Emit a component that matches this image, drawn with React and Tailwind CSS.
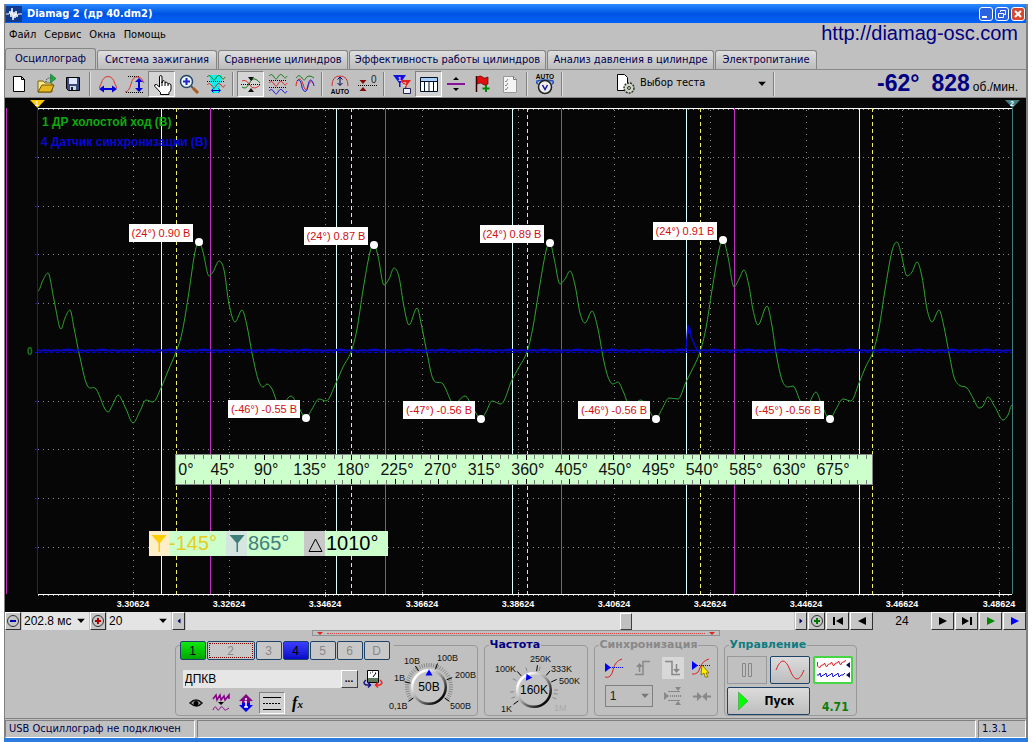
import React, { useState } from 'react';
import clsx from 'clsx';

const tabs = [
  { name: 'Осциллограф', width: 'w-[91px]' },
  { name: 'Система зажигания', width: 'w-[120px]' },
  { name: 'Сравнение цилиндров', width: 'w-[130px]' },
  { name: 'Эффективность работы цилиндров', width: 'w-[197px]' },
  { name: 'Анализ давления в цилиндре', width: 'w-[167px]' },
  { name: 'Электропитание', width: 'w-[102px]' },
];

const wave = [
  [38, 291], [43, 280], [48, 273], [54, 300], [61, 329], [65, 318], [70, 310], [74, 328], [79, 353], [87, 385], [96, 389],
  [108, 412], [113, 404], [118, 395], [126, 409], [133, 423], [140, 411], [146, 400], [153, 402], [161, 388], [168, 371],
  [176, 352], [182, 333], [188, 298], [195, 252], [199, 242], [203, 252], [209, 276], [213, 272], [219, 261], [224, 270], [229, 304], [235, 322], [242, 310], [247, 326], [252, 353], [258, 379], [263, 387], [267, 384], [272, 389], [280, 407], [291, 396], [298, 406], [306, 418], [312, 409], [319, 399], [326, 401], [336, 383], [343, 367],
  [351, 352], [357, 329], [363, 290], [370, 252], [374, 245], [378, 256], [384, 285], [389, 279], [394, 268], [399, 277], [404, 307], [409, 325], [417, 308], [422, 328], [427, 353], [433, 379], [443, 384], [454, 404], [465, 396], [473, 408], [481, 419], [486, 412], [492, 401], [501, 404], [512, 380], [519, 367],
  [527, 352], [533, 327], [539, 290], [546, 251], [550, 243], [554, 258], [560, 284], [565, 279], [570, 271], [575, 285], [580, 313], [585, 323], [592, 311], [598, 329], [603, 357], [608, 377], [613, 384], [618, 382], [623, 391], [630, 406], [641, 400], [648, 409], [656, 419], [662, 409], [669, 398], [678, 399], [686, 382], [694, 366],
  [700, 352], [706, 328], [712, 290], [719, 250], [723, 240], [728, 257], [734, 287], [739, 279], [744, 270], [749, 286], [753, 310], [758, 325], [767, 306], [772, 326], [776, 353], [782, 380], [788, 387], [793, 386], [801, 402], [808, 403], [816, 392], [822, 406], [830, 419], [836, 409], [843, 399], [851, 401], [859, 383], [866, 366],
  [873, 352], [879, 328], [885, 290], [892, 251], [897, 242], [901, 253], [907, 276], [912, 272], [917, 262], [922, 277], [927, 309], [932, 322], [939, 310], [944, 327], [949, 353], [954, 377], [959, 385], [967, 388], [973, 398], [979, 408], [983, 406], [988, 397], [995, 407], [1003, 420], [1008, 415], [1012, 405],
];

// horizontal tangents at peaks and dips, slope through the rest
const smoothPath = (pts) => {
  const slope = (i) => {
    if (i === 0 || i === pts.length - 1) return 0;
    const a = pts[i - 1], b = pts[i], c = pts[i + 1];
    if ((b[1] - a[1]) * (c[1] - b[1]) <= 0) return 0;
    return (c[1] - a[1]) / (c[0] - a[0]);
  };
  let d = `M${pts[0][0]} ${pts[0][1]}`;
  for (let i = 1; i < pts.length; i++) {
    const [x0, y0] = pts[i - 1];
    const [x1, y1] = pts[i];
    const h = (x1 - x0) / 3;
    d += `C${x0 + h} ${y0 + slope(i - 1) * h} ${x1 - h} ${y1 - slope(i) * h} ${x1} ${y1}`;
  }
  return d;
};

const noisePath = () => {
  let d = 'M38 350';
  for (let x = 40; x <= 1011; x += 2) {
    if (x === 688) {
      d += 'L688 325L689 332L690 330L691 337L693 341L696 348';
      x = 696;
      continue;
    }
    d += `L${x} ${350 + ((x * x * 31) % 17) / 7 - 1}`;
  }
  return d;
};

const peaks = [
  { x: 199, y: 242, left: 129, top: 224, width: 64, text: '(24°) 0.90 В' },
  { x: 374, y: 245, left: 304, top: 227, width: 64, text: '(24°) 0.87 В' },
  { x: 550, y: 243, left: 480, top: 225, width: 64, text: '(24°) 0.89 В' },
  { x: 723, y: 240, left: 653, top: 222, width: 64, text: '(24°) 0.91 В' },
  { x: 306, y: 418, left: 228, top: 400, width: 72, text: '(-46°) -0.55 В' },
  { x: 481, y: 419, left: 403, top: 401, width: 72, text: '(-47°) -0.56 В' },
  { x: 656, y: 419, left: 578, top: 401, width: 72, text: '(-46°) -0.56 В' },
  { x: 830, y: 419, left: 752, top: 401, width: 72, text: '(-45°) -0.56 В' },
];

const gridX = [133, 229, 325, 422, 518, 614, 710, 806, 902, 999];
const gridY = [157, 206, 254, 303, 401, 449, 498, 547];
const times = ['3.30624', '3.32624', '3.34624', '3.36624', '3.38624', '3.40624', '3.42624', '3.44624', '3.46624', '3.48624'];

const Scope = () => (
  <svg viewBox="5 98 1021 514" className="block w-full bg-[#060606] font-['Liberation_Sans',sans-serif]">
    <g shapeRendering="crispEdges" fill="none">
      {gridX.map((x) => <path key={x} d={`M${x}.5 110V594`} stroke="#8a8a8a" strokeDasharray="1 5" />)}
      {gridY.map((y) => <path key={y} d={`M38 ${y}.5H1011`} stroke="#8a8a8a" strokeDasharray="1 4" />)}
      {gridX.map((x) => <path key={x} d={`M${x}.5 592V597`} stroke="#bbb" />)}
      <path d="M38 108.5H1012M38 594.5H1012" stroke="#fff" />
      <path d="M38 109.5H1012M38 595.5H1012" stroke="#999" strokeDasharray="1 4" />
      {[161, 336, 512, 686, 859].map((x) => <path key={x} d={`M${x}.5 108V594`} stroke="#dcffff" />)}
      {[6, 210, 385, 561, 734].map((x) => <path key={x} d={`M${x}.5 108V594`} stroke="#c030c0" />)}
      {[176, 351, 527, 700, 872].map((x) => <path key={x} d={`M${x}.5 108V594`} stroke="#f0f060" strokeDasharray="4 3" />)}
      <path d="M37.5 108V594" stroke="#1414c0" />
      <path d="M35 157.5h3M35 206.5h3M35 254.5h3M35 303.5h3M35 352.5h3M35 401.5h3M35 449.5h3M35 498.5h3M35 547.5h3" stroke="#1414c0" />
      <path d="M1012.5 108V594" stroke="#427c7c" />
      <path d="M38 352.5H1012" stroke="#0000c8" strokeDasharray="3 3" />
    </g>
    <path d={smoothPath(wave)} fill="none" stroke="#2fa52f" />
    <path d={noisePath()} fill="none" stroke="#0505d2" strokeWidth="1.5" />
    <path d="M38 350.5H1012" stroke="#0808c0" strokeWidth="1.5" />
    <path d="M30 100h15l-7.500 8z" fill="#fc0" />
    <path d="M1005 100h15l-7.500 8z" fill="#427c7c" />
    <text x="37" y="106" fontSize="7" fontWeight="bold" fill="#fff" textAnchor="middle">1</text>
    <text x="1012" y="106" fontSize="7" fontWeight="bold" fill="#fff" textAnchor="middle">2</text>
    <g fontWeight="bold" fontSize="12">
      <text x="42" y="126" fill="#0faa0f">1 ДР холостой ход (В)</text>
      <text x="41" y="146" fill="#0808d8">4 Датчик синхронизации (В)</text>
    </g>
    <text x="27" y="355" fontSize="10" fontWeight="bold" fill="#1b7a1b">0</text>
    {peaks.map((p) => (
      <g key={p.x}>
        <circle cx={p.x} cy={p.y} r="4" fill="#fff" />
        <rect x={p.left} y={p.top} width={p.width} height="18" fill="#fff" />
        <text x={p.left + p.width / 2} y={p.top + 13} fontSize="11" fill="#d01010" textAnchor="middle">{p.text}</text>
      </g>
    ))}
    <rect x="175.500" y="454.500" width="697" height="30" fill="#ccffcc" stroke="#888" />
    {Array.from({ length: 79 }, (_, i) => {
      const major = i % 5 === 4;
      const x = Math.round(176.5 + (i + 1) * 8.73) + 0.5;
      const len = major ? 5 : 4;
      return <path key={i} d={`M${x} 455v${len}M${x} 484v-${len}`} stroke={major ? '#000' : '#777'} shapeRendering="crispEdges" />;
    })}
    <g fontSize="16" fill="#111" textAnchor="middle">
      {Array.from({ length: 16 }, (_, i) => (
        <text key={i} x={i ? 179 + i * 43.6 : 186} y="475">{i * 45}°</text>
      ))}
    </g>
    <rect x="149" y="531" width="239" height="25" fill="#ccffcc" />
    <rect x="149" y="531" width="20" height="25" fill="#ffefc8" />
    <rect x="226" y="531" width="21" height="25" fill="#d5e5e0" />
    <rect x="304" y="531" width="21" height="25" fill="#c8c8c8" />
    <path d="M151.500 535h15l-6.500 8v9h-1.500v-9z" fill="#fc0" />
    <path d="M229.500 535h15l-6.500 8v9h-1.500v-9z" fill="#3f7c7c" />
    <path d="M309 551.500l6.500-12.500 6.500 12.500z" fill="none" stroke="#000" />
    <g fontSize="20">
      <text x="169" y="550" fill="#e8cc20">-145°</text>
      <text x="248" y="550" fill="#42807c">865°</text>
      <text x="326" y="550" fill="#000">1010°</text>
    </g>
    <g fontSize="9" fontWeight="bold" fill="#fff" textAnchor="middle">
      {times.map((t, i) => <text key={t} x={gridX[i]} y="607">{t}</text>)}
    </g>
  </svg>
);

const Icon = ({ children, size = 'size-[22px]', box = '0 0 22 22' }) => (
  <svg viewBox={box} className={clsx('shrink-0', size)} fill="none" aria-hidden="true">{children}</svg>
);

const Zig = ({ y, c }) => <path d={`M2 ${y - 2}c2-2 3-2 5 1s3 2 4 0 3-4 5-1 3 2 4 0`} stroke={c} />;

const toolGroups = [
  [
    { label: 'Новый', icon: <path d="M5.500 3.500h8l3 3v12h-11zM13.500 3.500v3h3" fill="#fff" stroke="#000" /> },
    { label: 'Открыть', icon: <><path d="M3 8h5l2 2h7v9H3z" fill="#fbe78a" stroke="#7a6410" /><path d="M3 19l4-7h12l-3 7z" fill="#e8b820" stroke="#6a5000" /><path d="M11 9q0-4 4-4h1" stroke="#222" strokeDasharray="1 1" /><path d="M15.500 1v9L21 5.500z" fill="#18a83a" stroke="#063" strokeWidth=".5" /></> },
    { label: 'Сохранить', icon: <><path d="M4.500 4.500h13v13h-11l-2-2z" fill="#3a4c78" stroke="#000" /><path d="M7 5h8v6H7z" fill="#dfe8ff" /><path d="M8 13h6v4H8z" fill="#cfd8e0" /><path d="M9 14h2v3H9z" fill="#123" /></> },
  ],
  [
    { label: 'Период', icon: <><path d="M2.500 15q0-2 1.500-4Q6 3.500 11 3.500T18 11q1.500 2 1.500 4" stroke="#d33" /><path d="M5 16h12" stroke="#00d" strokeWidth="2" /><path d="M2 16l5-3.500v7zM20 16l-5-3.500v7z" fill="#00d" /></> },
    { label: 'Амплитуда', icon: <><path d="M4 3.500h12M2 19.500h18" stroke="#000" strokeDasharray="1 1" /><path d="M1 19q4 0 6-8t7-7q4 0 6 6" stroke="#d33" /><path d="M15 8v8" stroke="#00d" strokeWidth="2" /><path d="M15 5l4 4h-8zM15 19l4-4h-8z" fill="#00d" /></> },
    { label: 'Рука', pressed: true, icon: <path d="M8.500 14V4q0-1.500 1.200-1.500T11 4v6l.5-2q2-1 2.500.5V10q2-1.500 3 .5V11q2-1 3 .8V16q0 2-2 3.500v2H9.500v-2L3.500 13q0-2 2-1.500zM14 10v3M17 11v2M11 9v4" fill="#fff" stroke="#000" /> },
    { label: 'Масштаб', icon: <><circle cx="8.500" cy="8.500" r="6" fill="#e8f4ff" stroke="#246" strokeWidth="1.500" /><path d="M8.500 5v7M5 8.500h7" stroke="#22c" strokeWidth="2" /><path d="M13 13l2 2" stroke="#555" strokeWidth="2" /><path d="M15 15l5 5" stroke="#a85a20" strokeWidth="3" /></> },
    { label: 'Фрагмент', icon: <><path d="M5 2h12v8H5zM7 9h8v11H7z" fill="#1ee" /><Zig y={6} c="#070" /><Zig y={14} c="#c22" /><path d="M2 8.500h18" stroke="#000" strokeDasharray="1 1" /><path d="M7 17.500h8M8.500 15.500l-2 2 2 2M13.500 15.500l2 2-2 2" stroke="#00c" /></> },
  ],
  [
    { label: 'Совместить', pressed: true, icon: <><path d="M2 8q4-2 7 3t6 4 5-3" stroke="#c33" /><path d="M2 14q4 3 7-3t6-5 5 4" stroke="#171" /><path d="M1 11.500h20" stroke="#000" strokeDasharray="1 1" /><path d="M11 8L8 4h6zM11 15l3 4H8z" fill="#111" /></> },
    { label: 'Разделить', icon: <><Zig y={5} c="#171" /><Zig y={12} c="#d22" /><Zig y={20} c="#11d" /><path d="M2 7.500h18M2 14.500h18" stroke="#000" strokeDasharray="1 1" /></> },
    { label: 'Наложить', icon: <><path d="M2 5c2-3 4-3 6 0s3 2 4 0 4-3 8 0" stroke="#171" /><path d="M2 13c1-9 5-9 7-2s3 7 5 2 3-6 6-2" stroke="#d22" /><path d="M3 8c3-3 4 1 5 6s5 7 6-1 4-8 6 0" stroke="#11d" /></> },
  ],
  [
    { label: 'Автомасштаб', icon: <><path d="M3 13q0-10 8-10t8 10" stroke="#c33" /><path d="M11 4v8M8.500 6.500L11 4l2.500 2.500M8.500 10l2.500 2.500L13.500 10" stroke="#006" /><text x="11" y="20.500" fontSize="6.500" fontWeight="bold" fill="#000" textAnchor="middle">AUTO</text></> },
    { label: 'Установка нуля', icon: <><path d="M2 12.500h19" stroke="#000" strokeDasharray="1 1" /><path d="M7 11L3.500 7h7zM7 14l3.500 4h-7z" fill="#800c0c" /><text x="15" y="10" fontSize="10" fill="#222">0</text></> },
  ],
  [
    { label: 'Маркеры', icon: <><path d="M2 2h13l-5.500 8v4H8v-4z" fill="#11d" /><path d="M9 7h11l-4.500 6v4H14v-4z" fill="#d22" /><text x="7" y="8" fontSize="6" fontWeight="bold" fill="#fff">1</text><text x="12" y="13" fontSize="6" fill="#fff">2</text><path d="M12.500 15.500h7v5h-7z" fill="#eef" stroke="#225" /></> },
    { label: 'Таблица', pressed: true, icon: <><path d="M2.500 4.500h17v14h-17z" fill="#fff" stroke="#012" /><path d="M3 5h16v3H3z" fill="#a8d0f8" /><path d="M2 8.500h18M6.500 8v10M11 8v10M15.500 8v10" stroke="#012" /></> },
    { label: 'Уровень', icon: <><path d="M2 11h18" stroke="#819" strokeWidth="2" /><path d="M11 4l3 3H8zM11 18l3-3H8z" fill="#000" /></> },
    { label: 'Флаг', icon: <><path d="M4.500 3v16" stroke="#300" strokeWidth="1.500" /><path d="M5 4q4-2 5.500 0t5.500 0v7q-4 2-5.500 0T5 11z" fill="#e01010" stroke="#600" strokeWidth=".7" /><path d="M14 12v7M10.500 15.500h7" stroke="#080" strokeWidth="2" /></> },
    { label: 'Отчёт', icon: <><path d="M4.500 3.500h10l3 3v13h-13z" fill="#f4f4f4" stroke="#999" /><path d="M14.500 3.500v3h3" stroke="#777" /><path d="M6 8l1 1 2-3M6 12l1 1 2-3M6 16l1 1 2-3" stroke="#888" /></> },
  ],
  [
    { label: 'Автонастройка', icon: <><text x="11" y="6" fontSize="6.500" fontWeight="bold" fill="#000" textAnchor="middle">AUTO</text><path d="M4 11Q2 10 3 8q8-2 16 0q1 2-1 3" stroke="#25c" strokeWidth="1.500" /><circle cx="11" cy="14" r="6.500" fill="#eee" stroke="#222" strokeWidth="1.500" /><path d="M8.500 12L11 16.500 13.500 12" stroke="#11a" strokeWidth="1.500" /></> },
  ],
];

const ToolSep = () => <span className="mx-[3px] h-6 w-[2px] shrink-0 border-l border-[#808080] bg-[#dedede]" />;

const ToolButton = ({ label, pressed, icon }) => (
  <button
    type="button"
    aria-label={label}
    aria-pressed={!!pressed}
    className={clsx(
      'flex h-[26px] w-[27px] shrink-0 items-center justify-center',
      pressed && 'border border-t-[#808080] border-l-[#808080] border-r-white border-b-white bg-[#d4d4d4]'
    )}
  >
    <Icon>{icon}</Icon>
  </button>
);

const Nav = ({ label, width = 'w-[23px]', children }) => (
  <button
    type="button"
    aria-label={label}
    className={clsx('flex h-full shrink-0 items-center justify-center border border-t-white border-l-white border-r-[#303030] border-b-[#303030] bg-[#c6c6c6]', width)}
  >
    <Icon size="size-3.5" box="0 0 14 14">{children}</Icon>
  </button>
);

const Caret = () => (
  <svg viewBox="0 0 8 5" className="pointer-events-none absolute top-1/2 right-1 h-[5px] w-2 -translate-y-1/2" aria-hidden="true">
    <path d="M0 0h8L4 4.500z" fill="currentColor" />
  </svg>
);

// sizes are in dial units, the labels sit around the ticks
const Knob = ({ cx, cy, width, value, labels, ticks, minor, pointer, box, name }) => {
  const ray = (deg, r1, r2) => {
    const a = (deg * Math.PI) / 180;
    return `M${cx + r1 * Math.sin(a)} ${cy - r1 * Math.cos(a)}L${cx + r2 * Math.sin(a)} ${cy - r2 * Math.cos(a)}`;
  };
  return (
    <svg viewBox={box} className={clsx('shrink-0', width)} role="img" aria-label={name} fontSize="9">
      <defs>
        <linearGradient id={`edge-${name}`} x1="0" y1="0" x2="1" y2="1">
          <stop offset="0.200" stopColor="#fff" />
          <stop offset="0.500" stopColor="#999" />
          <stop offset="0.850" stopColor="#000" />
        </linearGradient>
      </defs>
      {minor.map((d) => <path key={d} d={ray(d, 20, 24)} stroke="#888" />)}
      {ticks.map((d) => <path key={d} d={ray(d, 19, 25)} stroke="#000" />)}
      <circle cx={cx} cy={cy} r="18" fill={`url(#edge-${name})`} />
      <circle cx={cx} cy={cy} r="15.500" fill="#c4c4c4" />
      <path d="M-3.500 2.500L0-3.500 3.500 2.500z" fill="#00f" transform={pointer} />
      <text x={cx} y={cy + 4} fontSize="12" textAnchor="middle">{value}</text>
      {labels.map((l) => <text key={l.t} x={l.x} y={l.y} fill={l.dim ? '#aaa' : '#111'}>{l.t}</text>)}
    </svg>
  );
};

const channels = [
  { n: '1', style: 'w-[26px] bg-linear-to-b from-[#10e810] to-[#00a800] text-black' },
  { n: '2', style: 'w-12 outline-1 -outline-offset-3 outline-dotted outline-[#800000] text-[#888]' },
  { n: '3', style: 'w-[26px] text-[#888]' },
  { n: '4', style: 'w-[26px] bg-linear-to-b from-[#3c3cff] to-[#0808c8] text-black' },
  { n: '5', style: 'w-[26px] text-[#888]' },
  { n: '6', style: 'w-[26px] text-[#888]' },
  { n: 'D', style: 'w-[26px] text-[#888]' },
];

const range = (from, to, step) => {
  const out = [];
  for (let i = from; i <= to; i += step) out.push(i);
  return out;
};

const groupBox = 'rounded-[4px] border border-[#999]';
const legendStyle = "ml-1 px-px font-['DejaVu_Sans',sans-serif] text-[11px] leading-3 font-bold";

const ChannelPanel = () => (
  <div className={clsx('mt-[6px] flex w-[303px] px-1', groupBox)}>
    <div className="w-[208px] shrink-0">
      <div className="-mt-[5px] flex w-[214px] gap-px bg-[#c0c0c0]">
        {channels.map((c) => (
          <button
            key={c.n}
            type="button"
            className={clsx('h-[19px] shrink-0 rounded-[2px] border border-[#1d4468] bg-[#c8c8c8] text-[12px] leading-none', c.style)}
          >
            {c.n}
          </button>
        ))}
      </div>
      <div className="mt-2 flex items-center gap-1 pl-[3px]">
        <div className="flex h-[18px] w-[175px] bg-[#e6e6e6]">
          <input aria-label="Датчик" defaultValue="ДПКВ" className="w-0 flex-1 px-[2px] text-[12px] outline-none" />
          <button type="button" aria-label="Выбрать датчик" className="w-[17px] border border-t-white border-l-white border-r-[#404040] border-b-[#404040] bg-[#c8c8c8] text-[10px] leading-[8px] font-bold">...</button>
        </div>
        <button type="button" aria-label="Поменять">
          <Icon>
            <path d="M5.500 2.500h11v12h-11z" fill="#fff" stroke="#000" />
            <path d="M6 10h10v4H6z" fill="#5a7a5a" />
            <path d="M8 5h1M10 4h1M13 5h1M11 9l3-4" stroke="#000" />
            <path d="M4 12q-4 3 0 5h4M6 14.500L8.500 17 6 19.500" stroke="#118" strokeWidth="1.500" />
            <path d="M18 12q4 3 0 5h-4M16 14.500L13.500 17l2.500 2.500" stroke="#e22" strokeWidth="1.500" />
          </Icon>
        </button>
      </div>
      <div className="mt-[2px] flex items-center gap-px pl-1">
        <button type="button" aria-label="Показать" className="flex h-[22px] w-6 items-center justify-center">
          <Icon>
            <path d="M5 11q6-6 12 0q-5 6-12 0z" fill="#aaa" stroke="#111" strokeWidth="1.500" />
            <circle cx="11" cy="11.500" r="2.500" fill="#000" />
          </Icon>
        </button>
        <button type="button" aria-label="Фильтр" className="flex h-[22px] w-6 items-center justify-center">
          <Icon>
            <path d="M3 7l3-4 1 5 3-5 1 5 3-4 1 4 4-5v4" stroke="#808" strokeWidth="1.500" />
            <path d="M3 18c2-5 3-3 4-1s2 1 3-1 3-1 4 1 2 1 5-1" stroke="#808" />
            <path d="M8 10h6l-3 3z" fill="#000" />
          </Icon>
        </button>
        <button type="button" aria-label="Инверсия" className="flex h-[22px] w-6 items-center justify-center">
          <Icon>
            <path d="M11 2l7 7h-3v2H7V9H4z" fill="#800880" />
            <path d="M11 20l7-7h-3v-2H7v2H4z" fill="#00e" />
            <path d="M11 6v2M9.500 9.500H11V15M9 15h4" stroke="#fff" strokeWidth="1.500" />
          </Icon>
        </button>
        <button type="button" aria-label="Линии" aria-pressed="true" className="flex h-[22px] w-[26px] items-center justify-center border border-t-[#808080] border-l-[#808080] border-r-white border-b-white bg-[#d0d0d0]">
          <Icon>
            <path d="M2 5.500h18M2 17.500h18" stroke="#000" />
            <path d="M2 11.500h18" stroke="#000" strokeDasharray="2 1" />
          </Icon>
        </button>
        <button type="button" aria-label="Функция" className="h-[22px] w-6 font-['Liberation_Serif',serif] text-[16px] leading-none font-bold italic">
          f<span className="text-[11px]">x</span>
        </button>
      </div>
    </div>
    <div className="flex items-center">
      <Knob
        name="voltage"
        box="388 652 90 64"
        width="w-[90px]"
        cx={429}
        cy={690}
        value="50В"
        pointer="translate(429 676)"
        minor={range(-126, 126, 6)}
        ticks={[-125, -78, -33, 20, 68, 125]}
        labels={[
          { t: '0,1В', x: 389, y: 712 }, { t: '1В', x: 394, y: 684 }, { t: '10В', x: 404, y: 667 },
          { t: '100В', x: 437, y: 664 }, { t: '200В', x: 455, y: 681 }, { t: '500В', x: 450, y: 712 },
        ]}
      />
    </div>
  </div>
);

const SyncPanel = () => (
  <fieldset className={clsx('w-[124px]', groupBox)}>
    <legend className={clsx(legendStyle, 'text-[#888]')}>Синхронизация</legend>
    <div className="grid grid-cols-4 justify-items-center gap-y-[6px] pt-[6px] pl-[5px]">
      <button type="button" aria-label="Уровень синхронизации">
        <Icon>
          <path d="M2 20q6 2 8-7t9-11" stroke="#d22" />
          <path d="M3 10.500h17" stroke="#00e" strokeDasharray="1 1" />
          <path d="M2 6l6 4.500L2 15z" fill="#00f" />
        </Icon>
      </button>
      <button type="button" aria-label="Фронт" disabled>
        <Icon>
          <path d="M3 17.500h8v-13h7M7.500 15V9" stroke="#888" strokeWidth="1.500" />
          <path d="M4 10l3.500-4 3.500 4z" fill="#888" />
        </Icon>
      </button>
      <button type="button" aria-label="Спад" disabled className="bg-[#d8d8d8]">
        <Icon>
          <path d="M3 4.500h7v13h8M14.500 7v6" stroke="#888" strokeWidth="1.500" />
          <path d="M11 12l3.500 4 3.500-4z" fill="#888" />
        </Icon>
      </button>
      <button type="button" aria-label="Указать уровень">
        <Icon>
          <path d="M1 17q6 1 8-6t9-9" stroke="#d22" />
          <path d="M2 8.500h18" stroke="#00e" strokeDasharray="1 1" />
          <path d="M1 4l6 4.500L1 13z" fill="#00f" />
          <path d="M11 8l7 8h-3l2 4h-3l-1-4-3 2z" fill="#fe0" stroke="#650" strokeWidth=".700" />
        </Icon>
      </button>
      <div className="relative col-span-2 h-[22px] w-12 text-[#777]">
        <select aria-label="Канал синхронизации" className="h-full w-full appearance-none border border-[#808080] px-1 text-[12px] leading-none text-[#222]">
          <option>1</option>
        </select>
        <Caret />
      </div>
      <button type="button" aria-label="По вертикали" disabled>
        <Icon>
          <path d="M6 6.500h12M6 15.500h12" stroke="#888" />
          <path d="M8 11h11" stroke="#888" strokeWidth="2" strokeDasharray="1 1" />
          <path d="M2 7l5 4-5 4zM13 2h6l-3 4zM13 20h6l-3-4z" fill="#888" />
        </Icon>
      </button>
      <button type="button" aria-label="К центру" disabled>
        <Icon>
          <path d="M2 11.500h7M13 11.500h7" stroke="#888" strokeWidth="2" />
          <path d="M6 7l5 4.500L6 16zM16 7l-5 4.500 5 4.500z" fill="#888" />
        </Icon>
      </button>
    </div>
  </fieldset>
);

const ControlPanel = () => (
  <fieldset className={clsx('w-[133px]', groupBox)}>
    <legend className={clsx(legendStyle, 'text-[#107c80]')}>Управление</legend>
    <div className="grid grid-cols-3 gap-x-[3px] gap-y-[3px] px-[2px] pt-[5px]">
      <button type="button" aria-label="Пауза" disabled className="flex h-7 items-center justify-center border border-[#999]">
        <Icon><path d="M6.500 4.500h3v13h-3zM12.500 4.500h3v13h-3z" stroke="#888" /></Icon>
      </button>
      <button type="button" aria-label="Осциллограмма" className="flex h-7 items-center justify-center rounded-[2px] border border-[#1d4468] bg-linear-to-b from-[#dcdcdc] to-[#bdbdbd]">
        <svg viewBox="0 0 30 20" className="h-5 w-[30px]" fill="none" aria-hidden="true">
          <path d="M1 10Q8-8 15 10T29 10" stroke="#d22" />
        </svg>
      </button>
      <button type="button" aria-label="Запись" className="flex h-7 items-center justify-center rounded-[2px] border-2 border-[#44d644] bg-white">
        <svg viewBox="0 0 34 20" className="h-5 w-[34px]" fill="none" aria-hidden="true">
          <path d="M1.500 2v4l2 2 2-3h2l1-2 2 4 2-3h2l1-2 2 4 2-3h2l1-2 2 4 2-3h2l1-2" stroke="#d22" />
          <path d="M1 15h2l1-2 1 4 2-2h1l2-2 1 4 2-2h1l2-2 1 4 2-2h1l2-2 1 4 2-2h2l2-2" stroke="#11d" />
          <path d="M34 2v6l-4-3zM34 12v6l-4-3z" fill="#115" />
        </svg>
      </button>
      <button type="button" className="col-span-2 flex h-7 items-center gap-[10px] rounded-[2px] border border-[#1d4468] bg-linear-to-b from-[#dcdcdc] to-[#bdbdbd] pl-[5px] font-['DejaVu_Sans_Condensed','DejaVu_Sans',sans-serif] text-[12px] font-bold">
        <Icon><path d="M5.500 2v18L15 11z" fill="#0f0" stroke="#484" strokeWidth=".500" /></Icon>
        Пуск
      </button>
      <span className="self-center justify-self-center pl-1 pt-3 font-['DejaVu_Sans_Condensed','DejaVu_Sans',sans-serif] text-[12px] leading-none font-bold text-[#0c7c0c]">4.71</span>
    </div>
  </fieldset>
);

const App = () => {
  const [activeTab, setActiveTab] = useState('Осциллограф');
  const [position, setPosition] = useState(728);

  return (
    <div className="bg-white px-1 pt-1 font-['Liberation_Sans',sans-serif] text-[11px] text-black">
      <div className="border-r-2 border-l border-[#808080] bg-[#c0c0c0]">
        <header className="flex h-[19px] items-center bg-linear-to-b from-[#2c8cff] via-[#0054e3] to-[#0062f8] pr-px pl-px">
          <svg viewBox="0 0 16 16" className="mr-[5px] size-4" aria-hidden="true">
            <path d="M0 0h16v16H0z" fill="#123a8c" />
            <path d="M0 8h3l1-3 1 6 1-9 1 12 1-8 1 6 1-7 1 6 1-3h4" fill="none" stroke="#fff" />
          </svg>
          <h1 className="flex-1 pt-px font-['DejaVu_Sans_Condensed','DejaVu_Sans',sans-serif] text-[11px] leading-[18px] font-bold text-white">Diamag 2 (др 40.dm2)</h1>
          <div className="flex gap-[2px]">
            <button type="button" aria-label="Свернуть" className="rounded-[3px] border border-white bg-[#2c62e0]">
              <Icon size="size-3" box="0 0 12 12"><path d="M2 9h5" stroke="#fff" strokeWidth="2" /></Icon>
            </button>
            <button type="button" aria-label="Восстановить" className="rounded-[3px] border border-white bg-[#2c62e0]">
              <Icon size="size-3" box="0 0 12 12"><path d="M4.500 4V2.500h5v4H8M2.500 5.500h5v4h-5z" stroke="#fff" /></Icon>
            </button>
            <button type="button" aria-label="Закрыть" className="rounded-[3px] border border-white bg-[#d8482c]">
              <Icon size="size-3" box="0 0 12 12"><path d="M3 3l6 6M9 3l-6 6" stroke="#fff" strokeWidth="2" /></Icon>
            </button>
          </div>
        </header>

        <div className="flex h-[25px] justify-between pr-2 pl-1">
          <nav className="flex items-center gap-2 font-['DejaVu_Sans_Condensed','DejaVu_Sans',sans-serif] text-[11px]">
            {['Файл', 'Сервис', 'Окна', 'Помощь'].map((item) => (
              <button key={item} type="button">{item}</button>
            ))}
          </nav>
          <a href="http://diamag-osc.com" className="text-[20px] leading-5 text-[#000080]">http://diamag-osc.com</a>
        </div>

        <div className="flex h-[21px] items-end gap-px" role="tablist">
          {tabs.map((tab) => (
            <button
              key={tab.name}
              type="button"
              role="tab"
              aria-selected={activeTab === tab.name}
              onClick={() => setActiveTab(tab.name)}
              className={clsx(
                "rounded-t-[3px] border border-b-0 border-[#858585] font-['DejaVu_Sans_Condensed','DejaVu_Sans',sans-serif] text-[11px] whitespace-nowrap text-[#00004c]",
                tab.width,
                activeTab === tab.name ? 'h-[21px]' : 'h-[19px] bg-linear-to-b from-[#dedede] to-[#bcbcbc]'
              )}
            >
              {tab.name}
            </button>
          ))}
        </div>

        <div className="flex h-[29px] items-center border-t border-b border-[#888]" role="toolbar">
          {toolGroups.map((group, i) => (
            <React.Fragment key={i}>
              {group.map((tool) => <ToolButton key={tool.label} {...tool} />)}
              <ToolSep />
            </React.Fragment>
          ))}
          <div className="relative ml-12 flex w-[156px] items-center">
            <div className="pointer-events-none absolute left-0">
              <Icon>
                <path d="M3.500 1.500h7l3 3v13h-10z" fill="#fff" stroke="#000" />
                <circle cx="15" cy="15" r="5" fill="#ced8c4" stroke="#333" strokeDasharray="2 1" strokeWidth="1.500" />
                <circle cx="15" cy="15" r="1.500" stroke="#333" />
              </Icon>
            </div>
            <select aria-label="Выбор теста" className="h-6 w-full appearance-none pl-[26px] font-['DejaVu_Sans_Condensed','DejaVu_Sans',sans-serif] text-[11px] outline-none">
              <option>Выбор теста</option>
            </select>
            <Caret />
          </div>
          <ToolSep />
          <div className="ml-auto flex items-baseline pr-2 font-bold text-[#000080]">
            <span className="mr-3 text-[23px] leading-6">-62°</span>
            <span className="mr-[3px] text-[23px] leading-6">828</span>
            <span className="text-[12px] font-normal text-black">об./мин.</span>
          </div>
        </div>

        <Scope />

        <div className="flex h-[18px] gap-px">
          <Nav label="Уменьшить развёртку" width="w-4">
            <circle cx="7" cy="7" r="5.500" stroke="#333" /><path d="M4 7h6" stroke="#00a" strokeWidth="2" />
          </Nav>
          <div className="relative w-[67px]">
            <select aria-label="Развёртка" className="h-full w-full appearance-none bg-[#e4e4e4] px-[2px] text-[12px] leading-none">
              <option>202.8 мс</option>
            </select>
            <Caret />
          </div>
          <Nav label="Увеличить развёртку" width="w-4">
            <circle cx="7" cy="7" r="5.500" stroke="#333" /><path d="M4 7h6M7 4v6" stroke="#a00" strokeWidth="2" />
          </Nav>
          <div className="relative w-[64px]">
            <select aria-label="Кадров" className="h-full w-full appearance-none bg-[#e4e4e4] px-[2px] text-[12px] leading-none">
              <option>20</option>
            </select>
            <Caret />
          </div>
          <Nav label="Прокрутка влево" width="w-[13px]"><path d="M8.500 4.500v5l-3-2.500z" fill="#006" /></Nav>
          <input
            type="range"
            aria-label="Позиция"
            min="0"
            max="1000"
            value={position}
            onChange={(e) => setPosition(e.target.value)}
            className="h-full w-0 flex-1 appearance-none bg-[#dedede] [&::-webkit-slider-thumb]:h-[17px] [&::-webkit-slider-thumb]:w-3 [&::-webkit-slider-thumb]:appearance-none [&::-webkit-slider-thumb]:border [&::-webkit-slider-thumb]:border-t-white [&::-webkit-slider-thumb]:border-r-[#404040] [&::-webkit-slider-thumb]:border-b-[#404040] [&::-webkit-slider-thumb]:border-l-white [&::-webkit-slider-thumb]:bg-[#c0c0c0]"
          />
          <Nav label="Прокрутка вправо" width="w-3"><path d="M5.500 4.500v5l3-2.500z" fill="#006" /></Nav>
          <Nav label="Добавить" width="w-[17px]">
            <circle cx="7" cy="7" r="5.500" stroke="#333" /><path d="M4 7h6M7 4v6" stroke="#070" strokeWidth="2" />
          </Nav>
          <Nav label="В начало"><path d="M2 3h2v8H2zM12 3v8L5 7z" fill="#000" /></Nav>
          <Nav label="Назад"><path d="M11 3v8L3 7z" fill="#000" /></Nav>
          <span className="w-14 text-center text-[12px] leading-[18px]">24</span>
          <Nav label="Вперёд"><path d="M3 3v8l8-4z" fill="#000" /></Nav>
          <Nav label="В конец"><path d="M2 3v8l7-4zM10 3h2v8h-2z" fill="#000" /></Nav>
          <Nav label="Воспроизвести"><path d="M3 3v8l8-4z" fill="#080" /></Nav>
          <Nav label="Воспроизвести кадр"><path d="M3 3v8l8-4z" fill="#00f" /></Nav>
        </div>

        <button type="button" aria-label="Свернуть панель" className="mx-auto flex h-[6px] w-[408px] items-center gap-1 border border-[#909090] px-1">
          <svg viewBox="0 0 6 3" className="h-[3px] w-[6px]" aria-hidden="true"><path d="M0 0h6L3 3z" fill="#d22" /></svg>
          <span className="h-0 flex-1 border-t border-dotted border-[#d44]" />
          <svg viewBox="0 0 6 3" className="h-[3px] w-[6px]" aria-hidden="true"><path d="M0 0h6L3 3z" fill="#d22" /></svg>
        </button>

        <div className="flex justify-center gap-[6px] border-b border-[#808080] pt-[3px] pb-[2px]">
          <ChannelPanel />
          <fieldset className={clsx('w-[104px]', groupBox)}>
            <legend className={clsx(legendStyle, 'text-[#000080]')}>Частота</legend>
            <Knob
              name="frequency"
              box="485 651 100 64"
              width="w-[100px]"
              cx={534}
              cy={690}
              value="160K"
              pointer="translate(528 677) rotate(-25)"
              minor={[-110, -95, -62, -20, 15, 90, 100, 112]}
              ticks={[-125, -42, 8, 40, 65]}
              labels={[
                { t: '1K', x: 501, y: 712 }, { t: '100K', x: 495, y: 672 }, { t: '250K', x: 530, y: 662 },
                { t: '333K', x: 551, y: 672 }, { t: '500K', x: 559, y: 684 }, { t: '1M', x: 554, y: 711, dim: true },
              ]}
            />
          </fieldset>
          <SyncPanel />
          <ControlPanel />
        </div>

        <footer className="flex h-[19px] gap-[2px] pt-px text-[#00004c]">
          <span className="w-[190px] border border-t-[#808080] border-l-[#808080] border-r-white border-b-white pl-[3px] font-['DejaVu_Sans_Condensed','DejaVu_Sans',sans-serif] text-[11px] leading-4 whitespace-nowrap">USB Осциллограф не подключен</span>
          <span className="flex-1 border border-t-[#808080] border-l-[#808080] border-r-white border-b-white" />
          <span className="w-12 border border-t-[#808080] border-l-[#808080] border-r-white border-b-white pl-[3px] font-['DejaVu_Sans_Condensed','DejaVu_Sans',sans-serif] text-[11px] leading-4">1.3.1</span>
        </footer>
      </div>
      <div className="h-1 bg-[#2c7ce0]" />
    </div>
  );
};

export default App;
